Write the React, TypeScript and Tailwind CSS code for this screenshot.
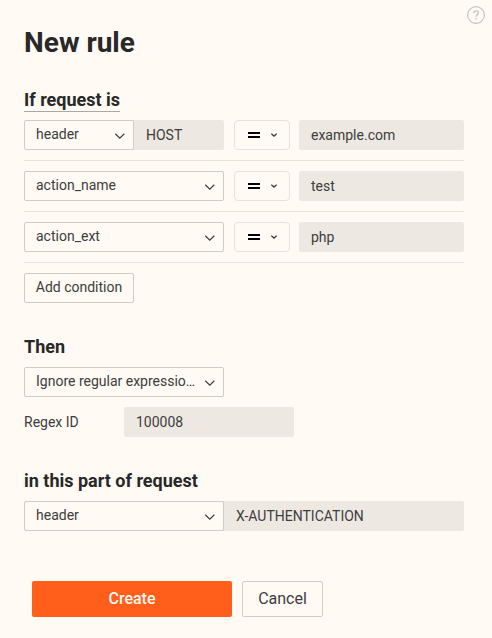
import type { ReactNode } from "react";

function Select({ children, className }: { children: ReactNode; className: string }) {
  return (
    <button
      type="button"
      className={`flex h-[30px] shrink-0 items-center justify-between border border-[#d0cdc8] pl-[11px] pr-2 text-left ${className}`}
    >
      <span className="truncate pb-0.5 leading-5">{children}</span>
      <svg className="mt-px shrink-0" width="11" height="7" viewBox="0 0 11 7" fill="none" stroke="#3c3c3c" strokeWidth="1.2">
        <path d="M1.3 1.7 5.8 6.1 10.3 1.7" />
      </svg>
    </button>
  );
}

function Field({ children, className }: { children: ReactNode; className: string }) {
  return <div className={`flex h-[30px] items-center bg-[#ede8e2] px-3 ${className}`}>{children}</div>;
}

function Operator() {
  return (
    <button
      type="button"
      className="ml-2.5 mr-[9px] flex h-[30px] w-14 shrink-0 items-center rounded border border-[#e5e2dd] pl-[13px]"
    >
      <svg width="12" height="6" viewBox="0 0 12 6" fill="#000">
        <path d="M0 0h12v2H0zM0 4h12v2H0z" />
      </svg>
      <svg className="ml-[11px]" width="6" height="4" viewBox="0 0 6 4" fill="none" stroke="#3a3a3a" strokeWidth="1.3">
        <path d="M.3.7 3 3.1 5.7.7" />
      </svg>
    </button>
  );
}

function Condition({ children }: { children: ReactNode }) {
  return <div className="mb-2.5 flex border-b border-[#e6e2dc] pb-2.5">{children}</div>;
}

export default function App() {
  return (
    <main className="relative h-[638px] w-[492px] bg-[#fffaf4] px-6 pr-7 pt-[25px] font-[Roboto,sans-serif] text-[14px] text-[#3d3d3c]">
      <svg className="absolute left-[467px] top-[6px]" width="18" height="18" viewBox="0 0 18 18" fill="none" stroke="#c5c1bc">
        <circle cx="9" cy="9" r="8.4" strokeWidth="1.1" />
        <path d="M6.7 7.1c0-3 4.7-3 4.7-.2 0 1.7-2.3 1.9-2.3 3.8M9.1 12v1.4" strokeWidth="1.3" />
      </svg>

      <h1 className="h-[63px] text-[28px] font-bold leading-9 text-[#272827]">New rule</h1>

      <section>
        <h2 className="mb-2 flex h-6 text-[18px] font-bold leading-6 text-[#272827]">
          <span className="h-6 border-b border-[#aaa8a4]">If request is</span>
        </h2>
        <Condition>
          <Select className="w-[110px] rounded-l-[2px]">header</Select>
          <Field className="w-[90px] rounded-r-[2px]">HOST</Field>
          <Operator />
          <Field className="w-[165px] rounded-[2px]">example.com</Field>
        </Condition>
        <Condition>
          <Select className="w-[200px] rounded-[2px]">action_name</Select>
          <Operator />
          <Field className="w-[165px] rounded-[2px]">test</Field>
        </Condition>
        <Condition>
          <Select className="w-[200px] rounded-[2px]">action_ext</Select>
          <Operator />
          <Field className="w-[165px] rounded-[2px]">php</Field>
        </Condition>
        <button type="button" className="block h-[30px] w-[110px] rounded-[2px] border border-[#d0cdc8] pb-0.5">
          Add condition
        </button>
      </section>

      <section className="mt-8">
        <h2 className="mb-2 text-[18px] font-bold leading-6 text-[#272827]">Then</h2>
        <Select className="w-[200px] rounded-[2px]">Ignore regular expressio…</Select>
        <div className="mt-2.5 flex items-center">
          <span className="w-[100px]">Regex ID</span>
          <Field className="w-[170px] rounded-[2px]">100008</Field>
        </div>
      </section>

      <section className="mt-8">
        <h2 className="mb-2 text-[18px] font-bold leading-6 text-[#272827]">in this part of request</h2>
        <div className="flex">
          <Select className="w-[200px] rounded-l-[2px]">header</Select>
          <Field className="w-60 rounded-r-[2px]">X-AUTHENTICATION</Field>
        </div>
      </section>

      <div className="ml-2 mt-[50px] flex gap-2.5 text-[16px]">
        <button type="button" className="h-9 w-[200px] rounded-[2px] bg-[#ff5e1b] font-medium text-[#fffaf4]">
          Create
        </button>
        <button type="button" className="h-9 w-[81px] rounded-[2px] border border-[#d0cdc8]">
          Cancel
        </button>
      </div>
    </main>
  );
}
